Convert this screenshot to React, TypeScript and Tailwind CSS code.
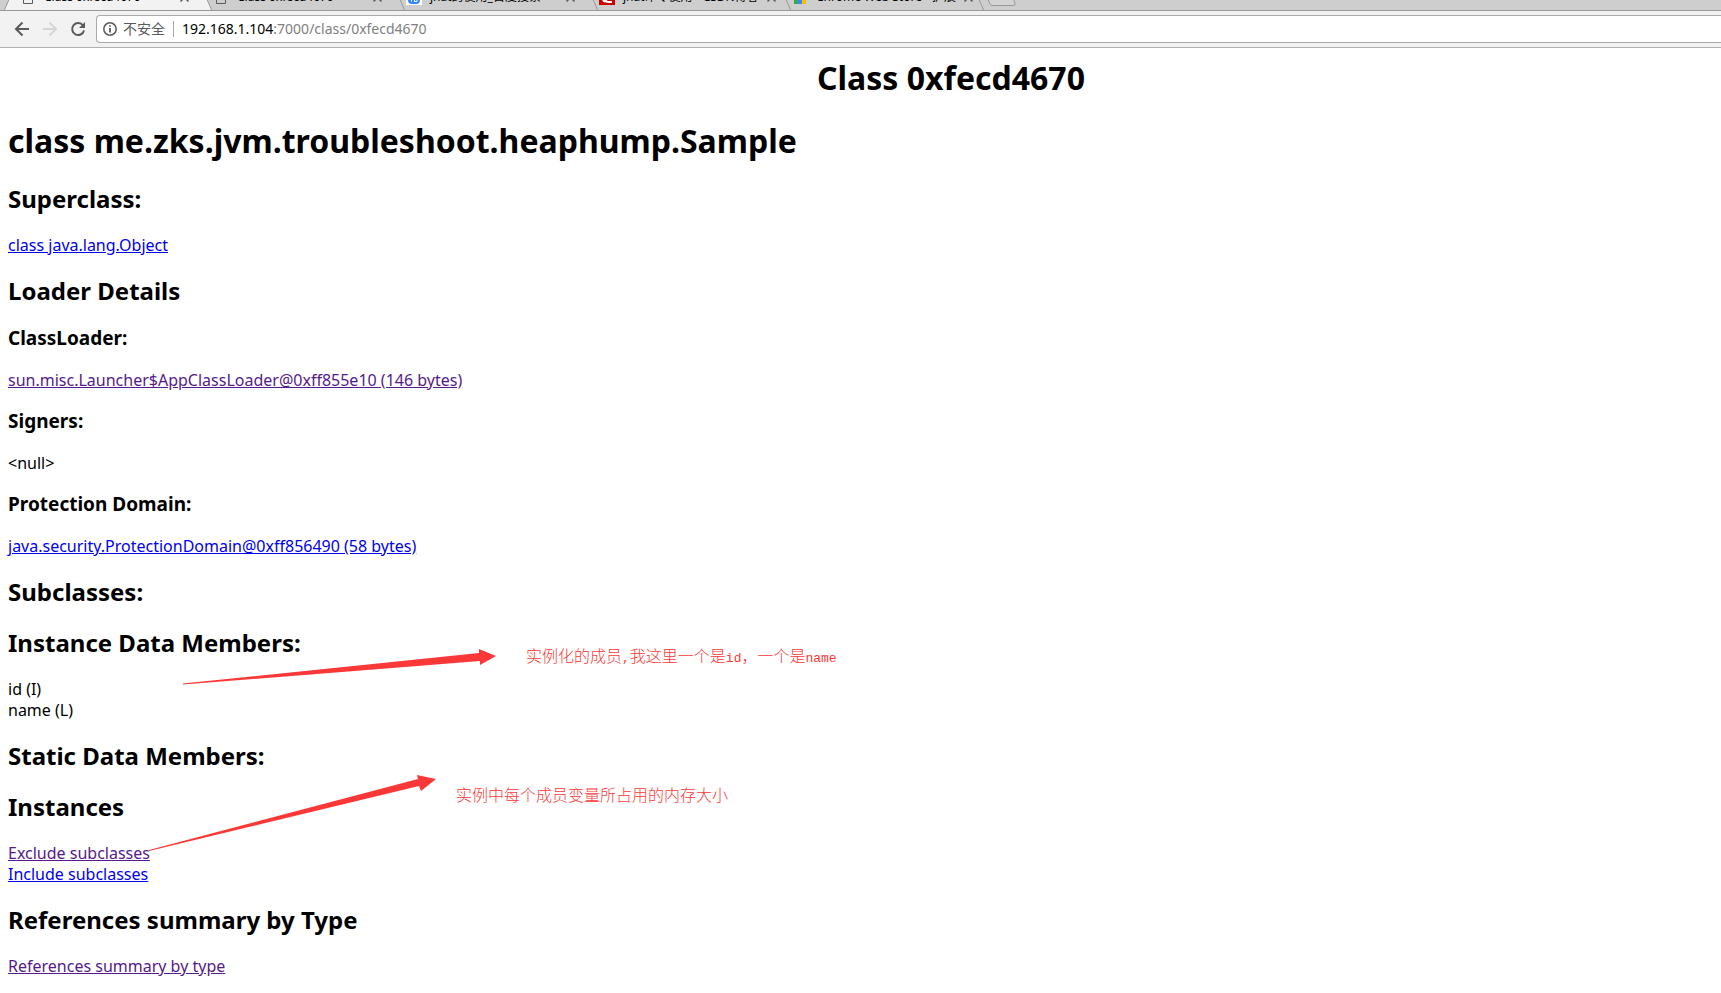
import React from 'react';

const tabs = [
  { title: 'Class 0xfecd4670', icon: 'page', active: true, layer: 'z-50' },
  { title: 'Class 0xfecd4670', icon: 'page', active: false, layer: 'z-40' },
  { title: 'jhat的使用_百度搜索', icon: 'baidu', active: false, layer: 'z-30' },
  { title: 'jhat命令使用 - CSDN博客', icon: 'csdn', active: false, layer: 'z-20' },
  { title: 'Chrome Web Store - 扩展', icon: 'store', active: false, layer: 'z-10' },
];

function TabIcon({ kind }: { kind: string }) {
  return (
    <svg width="16" height="16" viewBox="0 0 16 16" className="shrink-0" aria-hidden="true">
      {kind === 'page' && <path d="M3.5 1v13.500h9V1z" fill="none" stroke="#5a5a5a" />}
      {kind === 'baidu' && (
        <>
          <path d="M0 0h16v16H0z" fill="#fff" />
          <rect x="2" y="5" width="12" height="10" rx="4" fill="#3385ff" />
          <path d="M5.500 9v3.500M8.500 9v3.500h2.500V9" fill="none" stroke="#fff" />
        </>
      )}
      {kind === 'csdn' && (
        <>
          <path d="M0 0h16v16H0z" fill="#c00" />
          <path d="M3 9c0 5 3 5 10 5v-2c-5 0-6 0-6-3z" fill="#fff" />
        </>
      )}
      {kind === 'store' && (
        <>
          <path d="M2 3h12v12H2z" fill="#4285f4" />
          <path d="M2 3h4v12H2z" fill="#34a853" />
          <path d="M10 3h4v12h-4z" fill="#fbbc05" />
        </>
      )}
    </svg>
  );
}

function Arrow({ points, className }: { points: string; className: string }) {
  return (
    <svg className={className} aria-hidden="true">
      <polygon points={points} fill="#fb3838" />
    </svg>
  );
}

const link = 'text-[#0000ee] underline';
const visited = 'text-[#551a8b] underline';
const h2 = 'my-5 text-2xl leading-[31px] font-bold';
const h3 = 'mt-[19px] mb-[18px] text-[19px] leading-[25px] font-bold';
const para = '-mb-px pt-px leading-[21px]';
const note = "absolute text-base leading-5 whitespace-nowrap font-light text-[#fb3838]";
const latin = "font-['Liberation_Mono',monospace] text-[13px] font-normal";

export default function App() {
  return (
    <div className="min-h-screen overflow-hidden bg-white font-['Noto_Sans','Noto_Sans_CJK_SC',sans-serif] text-black">
      <header>
        <div className="relative isolate flex h-[11px] items-end overflow-hidden border-b border-[#999] bg-[#cecece] text-xs">
          {tabs.map((t, i) => (
            <div key={i} className={`relative flex h-[26px] w-[193px] shrink-0 items-center ${t.layer}`}>
              <svg className="absolute inset-y-0 left-0 h-full w-[212px]" viewBox="0 0 212 26" aria-hidden="true">
                <path d="M4 27L16 -1H200L212 27z" fill={t.active ? '#f2f2f2' : '#cecece'} stroke="#999" />
              </svg>
              <div className="relative flex flex-1 items-center gap-2 pr-1 pl-5">
                <TabIcon kind={t.icon} />
                <span className="flex-1 whitespace-nowrap">{t.title}</span>
                <button type="button" aria-label="Close tab">
                  <svg width="9" height="9" viewBox="0 0 9 9" stroke="#5a5a5a" strokeWidth="1.500"><path d="M0.500 0.500l8 8M8.500 0.500l-8 8" /></svg>
                </button>
              </div>
            </div>
          ))}
          <button type="button" aria-label="New tab" className="ml-[18px] pb-1">
            <svg width="34" height="16" viewBox="0 0 34 16" fill="#d4d4d4" stroke="#999"><path d="M1 0L7 14Q7.500 15.500 9 15.500H30Q33 15.500 32 13L26 0z" /></svg>
          </button>
        </div>
        <div className="flex h-[37px] items-center border-b border-[#b0b0b0] bg-[#f2f2f2] pl-[14px]">
          <button type="button" aria-label="Back" className="mr-3">
            <svg width="16" height="16" viewBox="0 0 16 16" fill="none" stroke="#5a5a5a" strokeWidth="2"><path d="M15 8H2M8.500 1.500L2 8l6.500 6.500" /></svg>
          </button>
          <button type="button" aria-label="Forward" className="mr-3">
            <svg width="16" height="16" viewBox="0 0 16 16" fill="none" stroke="#d5d5d5" strokeWidth="2"><path d="M1 8h13M7.500 1.500L14 8l-6.500 6.500" /></svg>
          </button>
          <button type="button" aria-label="Reload" className="mr-[10px]">
            <svg width="16" height="16" viewBox="0 0 16 16" fill="none" stroke="#5a5a5a" strokeWidth="2"><path d="M13 4.500A6 6 0 1 0 14 9.500" /><path d="M15 1v6H9z" fill="#5a5a5a" stroke="none" /></svg>
          </button>
          <div className="flex h-7 flex-1 items-center rounded-l-sm border border-r-0 border-[#a9a9a9] bg-white pl-[6px] text-sm">
            <svg width="14" height="14" viewBox="0 0 14 14" fill="none" stroke="#5a5a5a" strokeWidth="1.500" aria-hidden="true"><circle cx="7" cy="7" r="6.200" /><path d="M7 6v4.500M7 3.200v1.600" strokeWidth="1.800" /></svg>
            <span className="ml-[6px] text-[#5a5a5a]">不安全</span>
            <span className="mx-2 h-4 w-px bg-[#a9a9a9]" />
            <span>192.168.1.104<span className="text-[#808080]">:7000/class/0xfecd4670</span></span>
          </div>
        </div>
      </header>

      <main className="relative px-2 pt-[9px]">
        <h1 className="mb-[21px] pl-[181px] text-center text-[32px] leading-[42px] font-bold">Class 0xfecd4670</h1>
        <h1 className="my-[21px] text-[32px] leading-[42px] font-bold">class me.zks.jvm.troubleshoot.heaphump.Sample</h1>
        <h2 className={h2}>Superclass:</h2>
        <p className={para}><a href="#object" className={link}>class java.lang.Object</a></p>
        <h2 className={h2}>Loader Details</h2>
        <h3 className={h3}>ClassLoader:</h3>
        <p className={para}><a href="#loader" className={visited}>sun.misc.Launcher$AppClassLoader@0xff855e10 (146 bytes)</a></p>
        <h3 className={h3}>Signers:</h3>
        <p className={para}>&lt;null&gt;</p>
        <h3 className={h3}>Protection Domain:</h3>
        <p className={para}><a href="#domain" className={link}>java.security.ProtectionDomain@0xff856490 (58 bytes)</a></p>
        <h2 className={h2}>Subclasses:</h2>
        <h2 className={h2}>Instance Data Members:</h2>
        <p className={para}>id (I)<br />name (L)</p>
        <h2 className={h2}>Static Data Members:</h2>
        <h2 className={h2}>Instances</h2>
        <p className={para}>
          <a href="#exclude" className={visited}>Exclude subclasses</a><br />
          <a href="#include" className={link}>Include subclasses</a>
        </p>
        <h2 className={h2}>References summary by Type</h2>
        <p className={para}><a href="#references" className={visited}>References summary by type</a></p>

        <Arrow className="absolute top-[601px] left-[183px] h-10 w-80" points="0,34.500 296,4 296,0 313,7 297,16 297,12 0,35.500" />
        <p className={`${note} top-[598px] left-[526px]`}>
          实例化的成员<span className={latin}>,</span>我这里一个是<span className={latin}>id</span>，一个是<span className={latin}>name</span>
        </p>
        <Arrow className="absolute top-[727px] left-[149px] h-20 w-72" points="0,75 269,4 268,0 287,4 272,16 270,11 0,76" />
        <p className={`${note} top-[737px] left-[456px]`}>实例中每个成员变量所占用的内存大小</p>
      </main>
    </div>
  );
}
